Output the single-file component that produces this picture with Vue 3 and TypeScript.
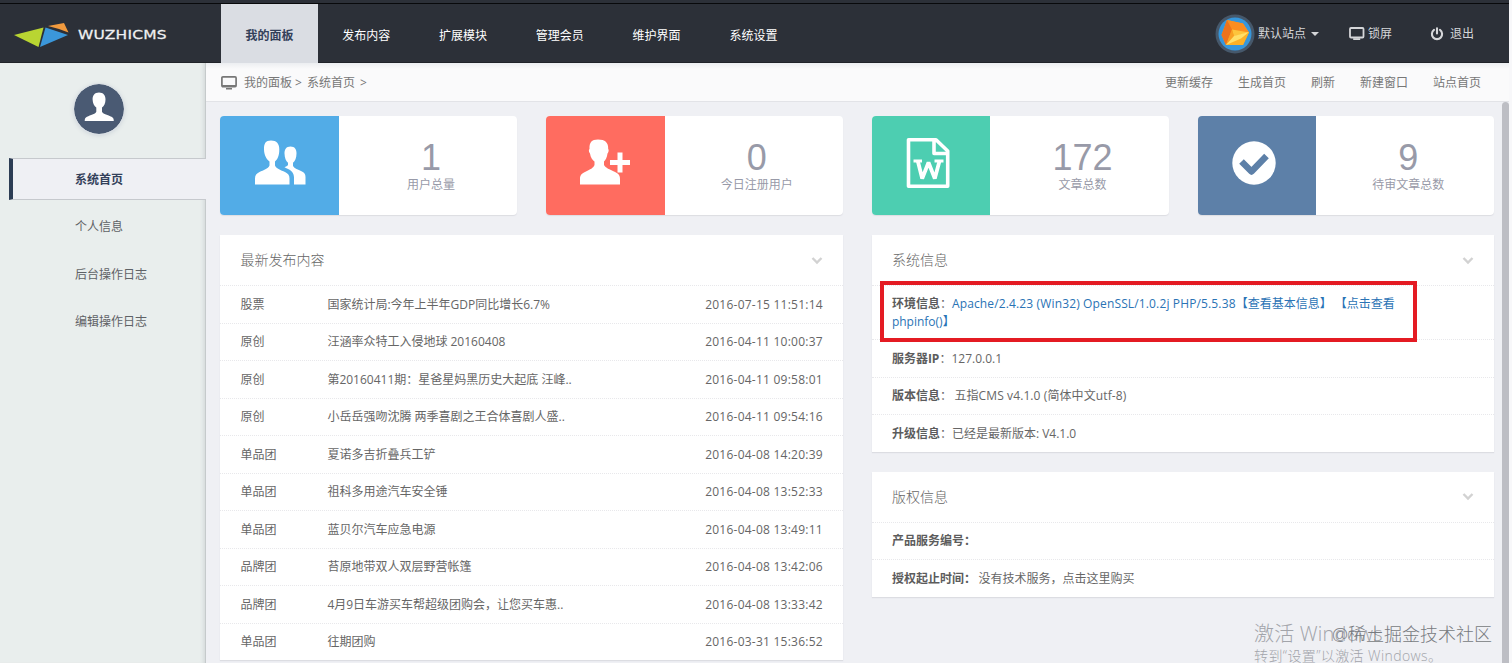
<script setup lang="ts">
interface Stat { icon: string; value: number; label: string; tone: string }
interface Post { kind: string; title: string; time: string }

const tabs: string[] = ['我的面板', '发布内容', '扩展模块', '管理会员', '维护界面', '系统设置']
const menu: string[] = ['系统首页', '个人信息', '后台操作日志', '编辑操作日志']
const tools: string[] = ['更新缓存', '生成首页', '刷新', '新建窗口', '站点首页']
const stats: Stat[] = [
  { icon: 'users', value: 1, label: '用户总量', tone: 'blue' },
  { icon: 'add', value: 0, label: '今日注册用户', tone: 'red' },
  { icon: 'word', value: 172, label: '文章总数', tone: 'green' },
  { icon: 'check', value: 9, label: '待审文章总数', tone: 'steel' },
]
const posts: Post[] = [
  { kind: '股票', title: '国家统计局:今年上半年GDP同比增长6.7%', time: '2016-07-15 11:51:14' },
  { kind: '原创', title: '汪涵率众特工入侵地球 20160408', time: '2016-04-11 10:00:37' },
  { kind: '原创', title: '第20160411期：星爸星妈黑历史大起底 汪峰..', time: '2016-04-11 09:58:01' },
  { kind: '原创', title: '小岳岳强吻沈腾 两季喜剧之王合体喜剧人盛..', time: '2016-04-11 09:54:16' },
  { kind: '单品团', title: '夏诺多吉折叠兵工铲', time: '2016-04-08 14:20:39' },
  { kind: '单品团', title: '祖科多用途汽车安全锤', time: '2016-04-08 13:52:33' },
  { kind: '单品团', title: '蓝贝尔汽车应急电源', time: '2016-04-08 13:49:11' },
  { kind: '品牌团', title: '苔原地带双人双层野营帐篷', time: '2016-04-08 13:42:06' },
  { kind: '品牌团', title: '4月9日车游买车帮超级团购会，让您买车惠..', time: '2016-04-08 13:33:42' },
  { kind: '单品团', title: '往期团购', time: '2016-03-31 15:36:52' },
]
</script>

<template>
  <div class="page">
    <header class="top">
      <div class="brand">
        <svg class="mark" width="56" height="26" viewBox="0 0 56 26">
          <path d="M0 12 29.500 4.500 24.500 24Z" fill="#b9d532" />
          <path d="M31.500 4.500 54 12 26 24Z" fill="#3b97da" />
          <path d="M34 3 50 0 54.500 9.500 45 6Z" fill="#f19a3e" />
        </svg>
        <span class="name">WUZHICMS</span>
      </div>
      <nav class="tabs">
        <a v-for="(t, i) in tabs" :key="t" class="tab" :class="{ on: i === 0 }">{{ t }}</a>
      </nav>
      <div class="account">
        <svg class="site" width="40" height="40" viewBox="0 0 40 40">
          <circle cx="20" cy="20" r="19.500" fill="#46586b" />
          <circle cx="20" cy="20" r="16.500" fill="#3697dc" />
          <path d="M12 6 28 9.500 34 18.500 28 31 11 31 6.500 21Z" fill="#f79a1e" />
          <path d="M12 6 28 9.500 34 18.500 17 15.500Z" fill="#fa8d20" />
          <path d="M12 6 17 15.500 11 31 6.500 21Z" fill="#ec721c" />
          <path d="M17 15.500 34 18.500 19 22.500Z" fill="#fdc43c" />
          <path d="M17 15.500 19 22.500 11 31Z" fill="#f9a023" />
          <path d="M19 22.500 34 18.500 28 31 11 31Z" fill="#fcb126" />
          <path d="M19 22 34 18 26 24.500 11 31Z" fill="#ffdf68" />
        </svg>
        <span class="acc-text">默认站点</span>
        <i class="caret"></i>
        <svg class="lock" width="16" height="14" viewBox="0 0 16 14">
          <rect x="1" y="1" width="13.500" height="9.500" rx="1" fill="none" stroke="#d5d6d9" stroke-width="1.800" />
          <path d="M4.200 11.200h7v1.800h-7z" fill="#d5d6d9" />
        </svg>
        <span class="acc-text">锁屏</span>
        <svg class="power" width="14" height="14" viewBox="0 0 14 14" fill="none" stroke="#d5d6d9" stroke-width="2.100" stroke-linecap="round">
          <path d="M4 2.900a5.100 5.100 0 1 0 6 0M7 1.200v5.300" />
        </svg>
        <span class="acc-text">退出</span>
      </div>
    </header>

    <div class="body">
      <aside class="side">
        <svg class="avatar" width="50" height="50" viewBox="0 0 50 50">
          <circle cx="25" cy="25" r="25" fill="#4a5a73" />
          <path d="M25 8.500c4.300 0 6.600 2.800 6.500 7 0 4-1.500 6.500-3.500 8v4.200c1.500 2.700 6 3.200 9.500 5 1.600.800 2.300 2 2.300 4.300H10.700c0-2.300.600-3.500 2.300-4.300 3.500-1.800 8-2.300 9.300-5v-4.200c-2-1.500-3.600-4-3.700-8-.1-4.200 2.100-7 6.400-7Z" fill="#fff" />
        </svg>
        <a v-for="(m, i) in menu" :key="m" class="item" :class="{ on: i === 0 }">{{ m }}</a>
      </aside>

      <main class="main">
        <div class="bar">
          <svg width="16" height="14" viewBox="0 0 16 14">
            <rect x=".9" y=".9" width="14.200" height="9.700" rx="1" fill="none" stroke="#777" stroke-width="1.700" />
            <path d="M1 9h14v2H1zM5 12h6v1.500H5z" fill="#777" />
          </svg>
          <span class="crumb">我的面板 &gt;</span>
          <span class="crumb second">系统首页 &gt;</span>
          <div class="tools"><a v-for="t in tools" :key="t">{{ t }}</a></div>
        </div>

        <div class="content">
          <section class="stats">
            <div v-for="s in stats" :key="s.label" class="stat">
              <div class="pic" :class="s.tone">
                <svg v-if="s.icon === 'users'" width="54" height="52" viewBox="0 0 54 52" fill="#fff">
                  <path d="M18 3.500c5.500 0 8.500 3.300 8.300 9 0 6-1.500 9.500-4.300 12v4c1.500 3.500 6 4.500 10 6.500 3 1.500 4.500 3 4.500 6.500v6H2v-6c0-3.500 1.500-5 4.500-6.500 4-2 8.500-3 10-6.500v-4c-3-2.500-5.300-6-5.500-12-.2-5.700 1.500-9 7-9Z" />
                  <path d="M37.500 9.500c4.200 0 6.200 2.800 6 7 0 4.500-1.500 7.500-3.500 9.300v3.200c1.500 2.500 5 3.500 8.500 5.200 2.800 1.400 4 2.800 4 5.800v7.500H41v-7c0-4.500-2.500-7-7-9l-2.500-1.200c1.200-.600 3-1 3.500-2.500v-2c-2-1.800-3.400-4.800-3.500-9.300-.1-4.200 1.800-7 6-7Z" />
                </svg>
                <svg v-else-if="s.icon === 'add'" width="54" height="52" viewBox="0 0 54 52" fill="#fff">
                  <path d="M20 2.500c7 0 10.500 3 10.200 9.500.8.500.6 3-.7 4.500-.5 4-2 6.500-3.500 8v3.500c1.500 3 6 4.500 10 6.500 4.500 2 6 3.500 6 7.500v5.500H2V42c0-4 1.500-5.500 6-7.500 4-2 7.500-3.500 8.500-6.500v-3.500c-2-1.500-4-4-4.500-8-1.300-1.500-1.500-4-.5-4.500-.3-6.500 2-9.500 8.500-9.500Z" />
                  <path d="M39.500 15.500h5v7.500H52v5h-7.500v7.500h-5V28H32v-5h7.500z" />
                </svg>
                <svg v-else-if="s.icon === 'word'" width="44" height="52" viewBox="0 0 44 52" fill="none" stroke="#fff" stroke-width="3.600" stroke-linejoin="round">
                  <path d="M2.500 2.800h27.500L41.700 14v35.200h-39.200zM28 2.800v13.700h13.700" />
                  <path d="M7.500 24h8.500M28.500 24h9" stroke-width="2.800" />
                  <path d="M11.800 24 16.200 41.500 22.500 25.500 28.800 41.500 33.500 24" stroke-width="3.800" stroke-linejoin="miter" stroke-miterlimit="2" />
                </svg>
                <svg v-else width="44" height="44" viewBox="0 0 44 44">
                  <circle cx="22" cy="22" r="21.700" fill="#fff" />
                  <path d="M9.500 20.500 19.500 30.500 34.500 15" fill="none" stroke="#5d80a8" stroke-width="6.500" stroke-linejoin="round" />
                </svg>
              </div>
              <div class="figure">
                <strong>{{ s.value }}</strong>
                <span>{{ s.label }}</span>
              </div>
            </div>
          </section>

          <div class="columns">
            <section class="panel">
              <h2>最新发布内容<svg width="12" height="9" viewBox="0 0 12 9"><path d="M1.500 2 6 6.500 10.500 2" /></svg></h2>
              <div v-for="p in posts" :key="p.time" class="row post">
                <span class="kind">{{ p.kind }}</span>
                <span class="title">{{ p.title }}</span>
                <time>{{ p.time }}</time>
              </div>
            </section>

            <div class="stack">
              <section class="panel">
                <h2>系统信息<svg width="12" height="9" viewBox="0 0 12 9"><path d="M1.500 2 6 6.500 10.500 2" /></svg></h2>
                <div class="row env">
                  <div><b>环境信息</b>：<a><span class="server">Apache/2.4.23 (Win32) OpenSSL/1.0.2j PHP/5.5.38</span>【查看基本信息】 【点击查看<br>phpinfo()】</a></div>
                  <i class="frame"></i>
                </div>
                <div class="row"><b>服务器IP</b>：<span class="val">127.0.0.1</span></div>
                <div class="row"><b>版本信息</b>：<span class="val shift wide">五指CMS v4.1.0 (简体中文utf-8)</span></div>
                <div class="row"><b>升级信息</b>：<span class="val">已经是最新版本: V4.1.0</span></div>
              </section>
              <section class="panel">
                <h2>版权信息<svg width="12" height="9" viewBox="0 0 12 9"><path d="M1.500 2 6 6.500 10.500 2" /></svg></h2>
                <div class="row"><b>产品服务编号：</b></div>
                <div class="row"><b>授权起止时间：</b><span class="val shift">没有技术服务，点击这里购买</span></div>
              </section>
            </div>
          </div>
        </div>
        <i class="scroll"></i>
      </main>
    </div>

    <div class="activate"><p>激活 Windows</p><small>转到“设置”以激活 Windows。</small></div>
    <div class="credit">@稀土掘金技术社区</div>
  </div>
</template>

<style>
body { margin: 0; background: #fff; }
</style>

<style scoped>
* { box-sizing: border-box; }
.page {
  position: relative; width: 1512px; height: 663px; overflow: hidden;
  padding-right: 3px; display: flex; flex-direction: column;
  font: 12px/18px "Open Sans", "Noto Sans CJK SC", sans-serif; color: #666; background: #f8f8fa;
}
.top {
  height: 63px; flex: none; display: flex; padding-top: 4px; background: #2c3038;
  border-bottom: 1px solid #202329; position: relative;
}
.top::before { content: ""; position: absolute; left: 0; right: 0; top: 3px; height: 1px; background: #08090b; }
.brand { width: 221px; display: flex; align-items: flex-start; padding: 18px 0 0 14px; }
.mark { flex: none; margin-top: 1px; }
.name {
  margin: 1px 0 0 8px; font: 15.500px/25px "DejaVu Sans", sans-serif; color: #f0f1f2; letter-spacing: .2px;
  -webkit-text-stroke: .3px #f0f1f2; transform: scaleY(.84);
}
.tabs { display: flex; }
.tab { width: 96.800px; text-align: center; line-height: 63px; height: 59px; color: #fff; font-weight: 400; }
.tab.on { background: #dadde3; color: #33405a; height: 60px; font-weight: 600; }
.account { margin-left: auto; display: flex; align-items: center; padding: 2px 35px 0 0; color: #d5d6d9; }
.acc-text { margin-left: 3px; line-height: 18px; }
.caret { border: 4px solid transparent; border-top-color: #d5d6d9; border-bottom: 0; margin: 0 30px 0 5px; }
.power { margin-left: 38px; }
.power + .acc-text { margin-left: 6px; }
.body { flex: 1; min-height: 0; display: flex; }
.side {
  width: 206px; flex: none; display: flex; flex-direction: column; background: #e9eeed;
  border-right: 1px solid #c5cacb; box-shadow: inset -4px 0 4px -3px #cfd4d5;
}
.avatar { margin: 21px 0 24px 74px; border-radius: 50%; box-shadow: 0 0 0 1px #dce1e6, 0 1px 5px #c5ccd4; flex: none; }
.item { height: 47.500px; line-height: 47px; padding-left: 75px; color: #5f6266; }
.item.on {
  height: 42px; line-height: 42px; margin: 0 -1px 3px 9px; padding-left: 62px; border-left: 4px solid #2d3d55;
  border-top: 1px solid #c6c9cd; border-bottom: 1px solid #c6c9cd;
  background: #eff0f4; color: #33405a; font-weight: 700; flex: none;
}
.main { flex: 1; min-width: 0; position: relative; display: flex; flex-direction: column; }
.bar {
  height: 39px; flex: none; display: flex; align-items: center; padding: 2px 28px 0 15px;
  background: linear-gradient(#eceef1, #fafafb 6px); border-bottom: 1px solid #e2e3e7; color: #777;
}
.crumb { margin-left: 7px; white-space: nowrap; }
.crumb.second { margin-left: 5px; word-spacing: 2px; }
.tools { margin-left: auto; display: flex; gap: 25px; }
.content { flex: 1; background: #eff0f4; padding: 14px 14.600px 0 14.400px; min-height: 0; }
.stats { display: grid; grid-template-columns: repeat(4, 1fr); gap: 29px; height: 99px; }
.stat { display: flex; background: #fff; border-radius: 4px; overflow: hidden; box-shadow: 0 1px 1px #dcdde2; }
.pic { width: 118.500px; flex: none; display: flex; align-items: center; justify-content: center; padding-bottom: 6px; }
.blue { background: #52ace7; }
.red { background: #ff6c60; }
.green { background: #4dceb1; padding-right: 6px; }
.steel { background: #5d80a8; padding-right: 6px; }
.figure { flex: 1; display: flex; flex-direction: column; align-items: center; padding: 23px 0 0 6px; color: #989aa8; }
.figure strong { font: 36px/37px "Liberation Sans", Arial, sans-serif; }
.figure span { line-height: 18px; }
.columns { display: grid; grid-template-columns: 1fr 1fr; gap: 29px; margin-top: 20px; align-items: start; }
.stack { display: flex; flex-direction: column; gap: 20px; }
.panel { background: #fff; box-shadow: 0 1px 1px #dcdde2; }
.panel h2 {
  margin: 0; height: 50px; padding: 0 20px; display: flex; align-items: center; justify-content: space-between;
  font-size: 14px; font-weight: 300; color: #666;
}
.panel h2 svg { fill: none; stroke: #d2d2d2; stroke-width: 2.400; }
.row { height: 37.500px; padding: 1px 20px 0; border-top: 1px dotted #e8e8eb; display: flex; align-items: center; white-space: nowrap; }
.kind { width: 87px; }
time { margin-left: auto; letter-spacing: .24px; }
.env { height: 54px; position: relative; }
.env a { color: #2a73b5; }
.server { letter-spacing: .14px; }
.wide { letter-spacing: .1px; }
b { font-weight: 700; color: #5c5c5c; }
.val.shift { margin-left: 2.500px; }
.frame { position: absolute; left: 8px; top: -5px; width: 537px; height: 61px; border: 4px solid #e41b23; }
.scroll { position: absolute; top: 39px; right: 0; bottom: 0; width: 7px; background: #bdbec4; border-radius: 4px 4px 0 0; }
.activate { position: absolute; left: 1254px; top: 620px; color: #a2a4aa; white-space: nowrap; font-weight: 300; }
.activate p { margin: 0; font-size: 20px; line-height: 28px; letter-spacing: .2px; }
.activate small { display: block; font-size: 14px; line-height: 15px; letter-spacing: .4px; }
.credit { position: absolute; left: 1332px; top: 621px; font-size: 18px; line-height: 26px; color: #777a80; white-space: nowrap; font-weight: 300; }
</style>
